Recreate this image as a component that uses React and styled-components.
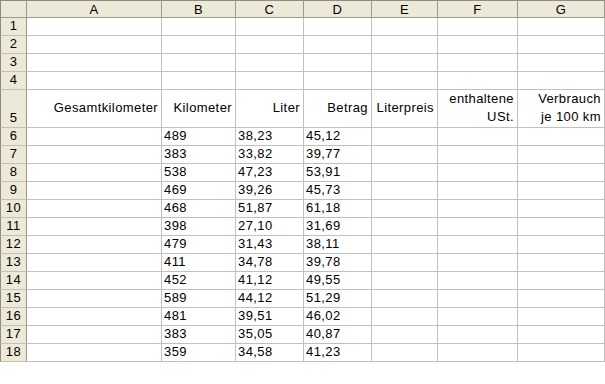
import React from "react";
import styled, { createGlobalStyle } from "styled-components";

const Global = createGlobalStyle`
  html, body { margin: 0; padding: 0; background: #fff; }
  body { font-family: "Liberation Sans", Arial, sans-serif; }
`;

const COLS = [
  { key: "A", w: 135 },
  { key: "B", w: 74 },
  { key: "C", w: 68 },
  { key: "D", w: 68 },
  { key: "E", w: 66 },
  { key: "F", w: 80 },
  { key: "G", w: 87 },
];

const data = [
  ["489", "38,23", "45,12"],
  ["383", "33,82", "39,77"],
  ["538", "47,23", "53,91"],
  ["469", "39,26", "45,73"],
  ["468", "51,87", "61,18"],
  ["398", "27,10", "31,69"],
  ["479", "31,43", "38,11"],
  ["411", "34,78", "39,78"],
  ["452", "41,12", "49,55"],
  ["589", "44,12", "51,29"],
  ["481", "39,51", "46,02"],
  ["383", "35,05", "40,87"],
  ["359", "34,58", "41,23"],
];

const Sheet = styled.table`
  border-collapse: separate;
  border-spacing: 0;
  table-layout: fixed;
  font-family: "Liberation Sans", Arial, sans-serif;
  font-size: 13px;
  letter-spacing: 0.4px;
  color: #000;
`;

const Corner = styled.th`
  box-sizing: border-box;
  width: 27px;
  height: 18px;
  padding: 0;
  background: #ece9d8;
  border-top: 1px solid #8f8d80;
  border-left: 1px solid #8f8d80;
  border-right: 1px solid #9d9a8a;
  border-bottom: 1px solid #9d9a8a;
`;

const ColHead = styled.th`
  box-sizing: border-box;
  width: ${(p) => p.$w}px;
  height: 18px;
  padding: 0;
  background: #ece9d8;
  font-weight: normal;
  text-align: center;
  vertical-align: middle;
  line-height: 15px;
  border-top: 1px solid #8f8d80;
  border-right: 1px solid #9d9a8a;
  border-bottom: 1px solid #9d9a8a;
`;

const RowHead = styled.th`
  box-sizing: border-box;
  height: ${(p) => p.$h}px;
  padding: 0 0 2px 0;
  background: #ece9d8;
  font-weight: normal;
  text-align: center;
  vertical-align: bottom;
  line-height: 15px;
  border-left: 1px solid #8f8d80;
  border-right: 1px solid #9d9a8a;
  border-bottom: 1px solid #c5c2b2;
`;

const Cell = styled.td`
  box-sizing: border-box;
  height: ${(p) => p.$h}px;
  padding: 0 ${(p) => (p.$right ? 3 : 1)}px 1px ${(p) => (p.$right ? 1 : 2)}px;
  text-align: ${(p) => (p.$right ? "right" : "left")};
  vertical-align: ${(p) => p.$valign || "bottom"};
  line-height: ${(p) => (p.$lh ? p.$lh : 16)}px;
  white-space: nowrap;
  overflow: hidden;
  border-right: 1px solid #c0c0c0;
  border-bottom: 1px solid #c0c0c0;
`;

const headers = [
  ["Gesamtkilometer"],
  ["Kilometer"],
  ["Liter"],
  ["Betrag"],
  ["Literpreis"],
  ["enthaltene", "USt."],
  ["Verbrauch", "je 100 km"],
];

export default function App() {
  return (
    <>
      <Global />
      <Sheet>
        <thead>
          <tr>
            <Corner />
            {COLS.map((c) => (
              <ColHead key={c.key} $w={c.w}>
                {c.key}
              </ColHead>
            ))}
          </tr>
        </thead>
        <tbody>
          {[1, 2, 3, 4].map((r) => (
            <tr key={r}>
              <RowHead $h={18}>{r}</RowHead>
              {COLS.map((c) => (
                <Cell key={c.key} $h={18} />
              ))}
            </tr>
          ))}
          <tr>
            <RowHead $h={36}>5</RowHead>
            {headers.map((lines, i) => (
              <Cell key={i} $h={36} $right $valign="middle" $lh={lines.length > 1 ? 18 : 16}>
                {lines.map((l, j) => (
                  <React.Fragment key={j}>
                    {j > 0 && <br />}
                    {l}
                  </React.Fragment>
                ))}
              </Cell>
            ))}
          </tr>
          {data.map((row, i) => (
            <tr key={i}>
              <RowHead $h={18}>{i + 6}</RowHead>
              <Cell $h={18} />
              {row.map((v, j) => (
                <Cell key={j} $h={18}>
                  {v}
                </Cell>
              ))}
              <Cell $h={18} />
              <Cell $h={18} />
              <Cell $h={18} />
            </tr>
          ))}
        </tbody>
      </Sheet>
    </>
  );
}
